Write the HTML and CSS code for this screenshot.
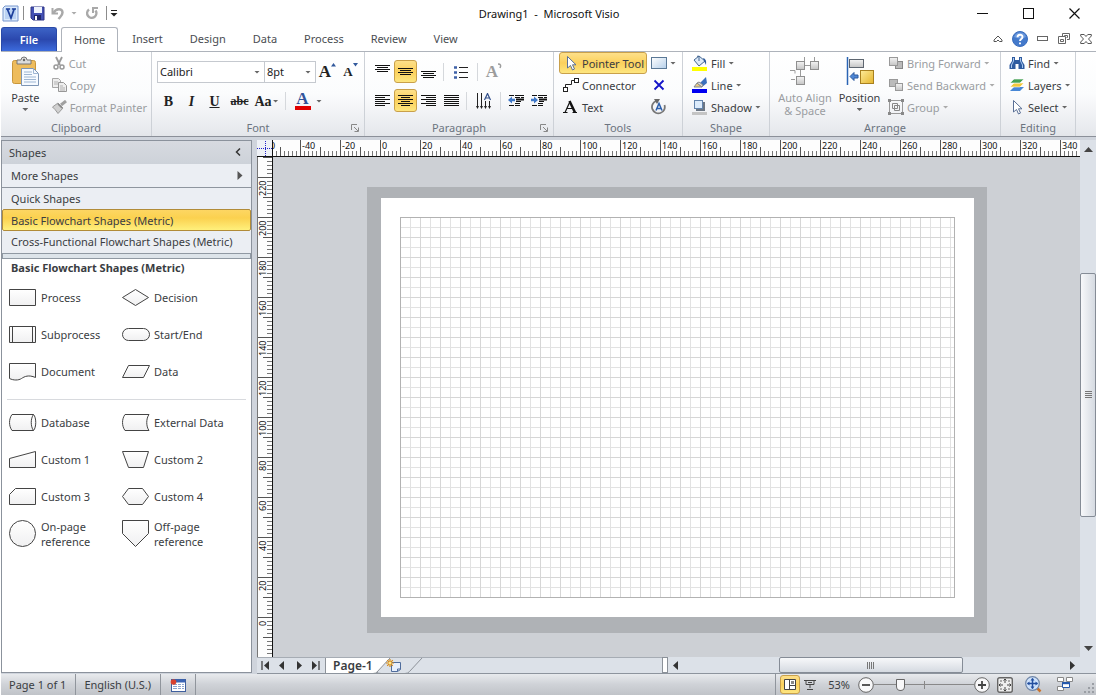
FILE: index.html
```html
<!DOCTYPE html>
<html lang="en">
<head>
<meta charset="utf-8">
<title>Drawing1 - Microsoft Visio</title>
<link rel="stylesheet" href="styles.css">
</head>
<body>
<svg class="defs" aria-hidden="true">
  <defs>
    <linearGradient id="shapeFill" x1="0" y1="0" x2="0" y2="1"><stop offset="0" stop-color="#fff"/><stop offset="1" stop-color="#f0f0f1"/></linearGradient>
    <linearGradient id="greyBox" x1="0" y1="0" x2="0" y2="1"><stop offset="0" stop-color="#f4f4f4"/><stop offset="1" stop-color="#c4c4c4"/></linearGradient>
    <linearGradient id="goldBox" x1="0" y1="0" x2="1" y2="1"><stop offset="0" stop-color="#fdeb9a"/><stop offset="1" stop-color="#e5b52c"/></linearGradient>
    <linearGradient id="blueBox" x1="0" y1="0" x2="1" y2="1"><stop offset="0" stop-color="#fff"/><stop offset="1" stop-color="#b5cfe9"/></linearGradient>
  </defs>
</svg>

<header class="titlebar">
  <div class="quick">
    <svg class="logo" width="17" height="17" viewBox="0 0 17 17"><path d="M3 1h13v15H1V3z" fill="#dceafb" stroke="#7796cd"/><rect x="3" y="3" width="11" height="11" fill="#bcd3f3"/><path d="M4 4h4M10 4h4M5.500 4.500l3.500 8.500 3-8.500" fill="none" stroke="#1d3f9b" stroke-width="1.700"/></svg>
    <span class="qsep"></span>
    <button class="qbtn" aria-label="Save"><svg width="15" height="15" viewBox="0 0 15 15"><path d="M1 1h13v13H3l-2-2z" fill="#4451b4" stroke="#2e3585"/><rect x="4" y="1" width="8" height="6" fill="#eef3fc"/><rect x="4" y="9" width="7" height="5" fill="#20276b"/><rect x="5" y="10" width="2" height="4" fill="#fff"/></svg></button>
    <button class="qbtn" aria-label="Undo"><svg width="14" height="13" viewBox="0 0 14 13"><path d="M1.500 1v5.500H7" fill="none" stroke="#a9a9a9" stroke-width="2"/><path d="M2.500 6C5 1 11.500 1 11.500 5.500c0 3-2 4-4 6.500" fill="none" stroke="#a9a9a9" stroke-width="2.500"/></svg></button>
    <span class="caret dim"></span>
    <button class="qbtn redo" aria-label="Repeat"><svg width="14" height="14" viewBox="0 0 14 14"><path d="M4 3.500A4.600 4.600 0 1 0 10.500 4.500" fill="none" stroke="#a9a9a9" stroke-width="2.500"/><path d="M7 2h6M8 1v6" stroke="#a9a9a9" stroke-width="2"/></svg></button>
    <span class="qsep"></span>
    <button class="qmore" aria-label="Customize Quick Access Toolbar"><svg width="8" height="8" viewBox="0 0 8 8"><path d="M1 1.500h6" stroke="#222"/><path d="M0.500 4h7L4 7.500z" fill="#222"/></svg></button>
  </div>
  <h1 class="wintitle">Drawing1 &nbsp;-&nbsp; Microsoft Visio</h1>
  <div class="winctl">
    <button aria-label="Minimize"><svg width="11" height="11" viewBox="0 0 11 11"><path d="M0 5.500h11" stroke="#111"/></svg></button>
    <button aria-label="Maximize"><svg width="11" height="11" viewBox="0 0 11 11"><rect x=".5" y=".5" width="10" height="10" fill="none" stroke="#111"/></svg></button>
    <button aria-label="Close"><svg width="11" height="11" viewBox="0 0 11 11"><path d="M.5.500l10 10M10.500.500l-10 10" stroke="#111" stroke-width="1.200"/></svg></button>
  </div>
</header>

<nav class="tabs">
  <button class="tab file">File</button>
  <button class="tab active">Home</button>
  <button class="tab">Insert</button>
  <button class="tab">Design</button>
  <button class="tab">Data</button>
  <button class="tab">Process</button>
  <button class="tab">Review</button>
  <button class="tab">View</button>
  <div class="tabtools">
    <button aria-label="Minimize the Ribbon"><svg width="10" height="8" viewBox="0 0 10 8"><path d="M1 5l4-4 4 4v1.500H6.500L5 5 3.500 6.500H1z" fill="#fff" stroke="#555"/></svg></button>
    <button aria-label="Help"><svg width="16" height="16" viewBox="0 0 16 16"><circle cx="8" cy="8" r="7.500" fill="#4379cb" stroke="#3a6dbd"/><path d="M2 6a6.300 6.300 0 0 1 12 0q-6 3-12 0z" fill="#6d9ade"/><path d="M5.500 6.200C5.500 3 10.500 3 10.500 6c0 2-2.500 2-2.500 4M8 11.500v1.800" stroke="#fff" stroke-width="1.900" fill="none"/></svg></button>
    <button aria-label="Minimize Window"><svg width="11" height="5" viewBox="0 0 11 5"><rect x=".5" y=".5" width="10" height="4" fill="#fff" stroke="#666"/></svg></button>
    <button aria-label="Restore Window"><svg width="12" height="11" viewBox="0 0 12 11"><path d="M4.500 3V.5h7v6H9M6.500 3V2.500h3v2H8.500" fill="none" stroke="#666"/><path d="M.5 3.500h7v7h-7zM2.500 6.500h3v2h-3z" fill="none" stroke="#666"/></svg></button>
    <button aria-label="Close Window"><svg width="12" height="10" viewBox="0 0 12 10"><path d="M.7.500h3.500L6 2.500 7.800.5h3.500v1.500L8.500 5l2.800 3v1.500H7.800L6 7.500 4.200 9.500H.7V8l2.800-3L.7 2z" fill="#fff" stroke="#555"/></svg></button>
  </div>
</nav>

<section class="ribbon">
  <div class="group clipboard">
    <div class="body">
      <button class="big"><svg width="29" height="30" viewBox="0 0 29 30"><rect x="1.500" y="4.500" width="23" height="23" rx="2" fill="#eebc5c" stroke="#c9973b"/><path d="M6 8V4h4q0-3 3-3t3 3h4v4z" fill="#dcdcdc" stroke="#777"/><circle cx="13" cy="4" r="1.200" fill="#666"/><path d="M10.500 12.500h12l5 5v12h-17z" fill="#f6faff" stroke="#7d95b5"/><path d="M22.500 12.500v5h5M13 16h8M13 18.500h8M13 21h12M13 23.500h12M13 26h12" fill="none" stroke="#9eb6d3"/></svg><span>Paste</span><i class="caret"></i></button>
      <div class="stack">
        <button class="cmd off"><svg width="14" height="14" viewBox="0 0 14 14"><path d="M4 1l4 8M10 1L6 9" stroke="#9a9a9a" stroke-width="1.800"/><circle cx="4" cy="11" r="2" fill="none" stroke="#9a9a9a" stroke-width="1.500"/><circle cx="10" cy="11" r="2" fill="none" stroke="#9a9a9a" stroke-width="1.500"/></svg>Cut</button>
        <button class="cmd off"><svg width="15" height="14" viewBox="0 0 15 14"><path d="M.5.500h6l2 2v7h-8z" fill="#eee" stroke="#a7a7a7"/><path d="M6.500 4.500h5l3 3v6h-8z" fill="#eee" stroke="#979797"/><path d="M2 4h4M2 6h4M8 8h3M8 10h5M8 12h5" stroke="#b1b1b1"/></svg>Copy</button>
        <button class="cmd off"><svg width="15" height="14" viewBox="0 0 15 14"><path d="M14 1l-5 4" stroke="#a0a0a0" stroke-width="3"/><path d="M6 3l5 5-5 5.500Q3 9 .5 7z" fill="#d0d0d0" stroke="#999"/><path d="M6 4l4 4" stroke="#888" stroke-width="1.500"/></svg>Format Painter</button>
      </div>
    </div>
    <div class="name">Clipboard</div>
  </div>

  <div class="group font">
    <div class="body two">
      <div class="row">
        <span class="combo face"><select aria-label="Font"><option>Calibri</option></select><i class="caret"></i></span>
        <span class="combo size"><select aria-label="Font size"><option>8pt</option></select><i class="caret"></i></span>
        <button class="glyph grow" aria-label="Grow Font"><span>A</span><svg width="5" height="4" viewBox="0 0 5 4"><path d="M0 3.500L2.500 0 5 3.500z" fill="#32599c"/></svg></button>
        <button class="glyph shrink" aria-label="Shrink Font"><span>A</span><svg width="5" height="4" viewBox="0 0 5 4"><path d="M0 0h5L2.500 3.500z" fill="#32599c"/></svg></button>
      </div>
      <div class="row letters">
        <button class="glyph b">B</button>
        <button class="glyph i">I</button>
        <button class="glyph u">U</button>
        <button class="glyph s">abc</button>
        <button class="glyph aa">Aa<i class="caret"></i></button>
        <span class="rsep"></span>
        <button class="glyph color" aria-label="Font Color"><span>A</span></button>
        <i class="caret"></i>
      </div>
    </div>
    <div class="name">Font<button class="launch" aria-label="Font dialog"><svg width="8" height="8" viewBox="0 0 8 8"><path d="M.5 6V.5H6M3 3l4 4M7.500 3.500v4h-4" fill="none" stroke="#888"/></svg></button></div>
  </div>

  <div class="group para">
    <div class="body two">
      <div class="row">
        <button class="ic" aria-label="Align Top"><svg width="15" height="15" viewBox="0 0 15 15"><path d="M0 1.500h15M2 3.500h11M0 5.500h15M2 7.500h11" stroke="#111"/></svg></button>
        <button class="ic on" aria-label="Align Middle"><svg width="15" height="15" viewBox="0 0 15 15"><path d="M0 4.500h15M2 6.500h11M0 8.500h15M2 10.500h11" stroke="#111"/></svg></button>
        <button class="ic" aria-label="Align Bottom"><svg width="15" height="15" viewBox="0 0 15 15"><path d="M0 7.500h15M2 9.500h11M0 11.500h15M2 13.500h11" stroke="#111"/></svg></button>
        <span class="rsep"></span>
        <button class="ic wide" aria-label="Bullets"><svg width="14" height="14" viewBox="0 0 14 14"><path d="M5 2.500h9M5 7.500h9M5 12.500h9" stroke="#222"/><path d="M0 2.500h3M0 7.500h3M0 12.500h3" stroke="#3f62a8" stroke-width="2.500"/></svg></button>
        <span class="rsep"></span>
        <button class="glyph rot" aria-label="Rotate Text">A<svg width="4" height="6" viewBox="0 0 4 6"><path d="M0 1q4 0 2 4" fill="none" stroke="#9c9c9c" stroke-width="1.500"/></svg></button>
      </div>
      <div class="row">
        <button class="ic" aria-label="Align Left"><svg width="15" height="13" viewBox="0 0 15 13"><path d="M0 1.500h15M0 3.500h10M0 5.500h15M0 7.500h10M0 9.500h15M0 11.500h10" stroke="#111"/></svg></button>
        <button class="ic on" aria-label="Center"><svg width="15" height="13" viewBox="0 0 15 13"><path d="M0 1.500h15M3 3.500h9M0 5.500h15M3 7.500h9M0 9.500h15M3 11.500h9" stroke="#111"/></svg></button>
        <button class="ic" aria-label="Align Right"><svg width="15" height="13" viewBox="0 0 15 13"><path d="M0 1.500h15M5 3.500h10M0 5.500h15M5 7.500h10M0 9.500h15M5 11.500h10" stroke="#111"/></svg></button>
        <button class="ic" aria-label="Justify"><svg width="15" height="13" viewBox="0 0 15 13"><path d="M0 1.500h15M0 3.500h15M0 5.500h15M0 7.500h15M0 9.500h15M0 11.500h15" stroke="#111"/></svg></button>
        <span class="rsep"></span>
        <button class="ic wide" aria-label="Text Direction"><svg width="16" height="16" viewBox="0 0 16 16"><path d="M1.500 0v14M5.500 0v14M9.500 8v6M13.500 8v6" stroke="#222"/><path d="M8.500 7l3-6.500 3 6.500M9.500 5h4" fill="none" stroke="#33518c" stroke-width="1.200"/><path d="M0 13h3l-1.500 3zM4 13h3l-1.500 3zM8 13h3l-1.500 3zM12 13h3l-1.500 3z" fill="#222"/></svg></button>
        <span class="rsep"></span>
        <button class="ic" aria-label="Decrease Indent"><svg width="16" height="13" viewBox="0 0 16 13"><path d="M1 1.500h15M7 3.500h9M8 7.500h6M7 9.500h5M1 11.500h11" stroke="#111" stroke-dasharray="5 1 20"/><path d="M8 5.500h8" stroke="#111" stroke-width="2"/><path d="M0 6L4 2.500v2.300h3v2.400H4v2.300z" fill="#3f78c8"/></svg></button>
        <button class="ic" aria-label="Increase Indent"><svg width="16" height="13" viewBox="0 0 16 13"><path d="M1 1.500h15M7 3.500h9M8 7.500h6M7 9.500h5M1 11.500h11" stroke="#111" stroke-dasharray="5 1 20"/><path d="M8 5.500h8" stroke="#111" stroke-width="2"/><path d="M7 6L3 2.500v2.300H0v2.400h3v2.300z" fill="#3f78c8"/></svg></button>
      </div>
    </div>
    <div class="name">Paragraph<button class="launch" aria-label="Paragraph dialog"><svg width="8" height="8" viewBox="0 0 8 8"><path d="M.5 6V.5H6M3 3l4 4M7.500 3.500v4h-4" fill="none" stroke="#888"/></svg></button></div>
  </div>

  <div class="group tools">
    <div class="body">
      <div class="stack">
        <button class="cmd on"><svg width="16" height="16" viewBox="0 0 16 16"><path d="M4.500 1.500v11.500l3-2.500 2 4.500 2-1-2-4.200h3.500z" fill="#fff" stroke="#5a7096"/></svg>Pointer Tool</button>
        <button class="cmd"><svg width="16" height="16" viewBox="0 0 16 16"><path d="M2.500 10V7.500h6v-4h3" fill="none" stroke="#222"/><rect x=".5" y="10.500" width="4" height="4" fill="#fff" stroke="#222"/><rect x="11.500" y="1.500" width="4" height="4" fill="#fff" stroke="#222"/></svg>Connector</button>
        <button class="cmd"><svg width="16" height="16" viewBox="0 0 16 16"><path d="M2 13.500L7 2.500M4.500 9.500h6M0 13.500h4.500M9.500 13.500H14" fill="none" stroke="#111" stroke-width="1.200"/><path d="M6.500 2l5.500 11.500" stroke="#111" stroke-width="2.500"/></svg>Text</button>
      </div>
      <div class="stack side">
        <button class="cmd" aria-label="Rectangle"><svg width="16" height="12" viewBox="0 0 16 12"><rect x=".5" y=".5" width="15" height="11" fill="url(#blueBox)" stroke="#5a7896"/></svg><i class="caret"></i></button>
        <button class="cmd" aria-label="Connection Point"><svg width="16" height="12" viewBox="0 0 16 12"><path d="M3.500 1.500l9 9M12.500 1.500l-9 9" stroke="#1414c8" stroke-width="1.800"/></svg></button>
        <button class="cmd" aria-label="Text Block"><svg width="16" height="16" viewBox="0 0 16 16"><path d="M5 2A6.400 6.400 0 1 0 13.500 6" fill="none" stroke="#777" stroke-width="1.800"/><path d="M3 0h6L6 5z" fill="#666"/><path d="M5 11.500l3-7 3 7M6 9.500h4" fill="none" stroke="#2b5fae" stroke-width="1.500"/></svg></button>
      </div>
    </div>
    <div class="name">Tools</div>
  </div>

  <div class="group shape">
    <div class="body">
      <div class="stack">
        <button class="cmd"><svg width="17" height="16" viewBox="0 0 17 16"><path d="M3 5l5-4 6 5-6 5z" fill="#dce9f8" stroke="#456792"/><path d="M8 6V1.500a1.500 1.500 0 0 0-2 0" fill="none" stroke="#456792"/><path d="M12 3q4 1 3 7l-2-4z" fill="#2f5b9c"/><rect x="1" y="12" width="15" height="4" fill="#ff0"/></svg>Fill<i class="caret"></i></button>
        <button class="cmd"><svg width="17" height="16" viewBox="0 0 17 16"><path d="M15 0l1 6-5 4-3-3z" fill="#3b70bd"/><path d="M3 10l3-4 5 4H3z" fill="#e9cb87" stroke="#7d8795"/><path d="M6 6l5 4 1-2-4-3z" fill="#ddd" stroke="#888"/><rect x="1" y="12" width="15" height="4" fill="#0000f0"/></svg>Line<i class="caret"></i></button>
        <button class="cmd"><svg width="17" height="16" viewBox="0 0 17 16"><rect x="5" y="3" width="9" height="9" fill="#6c7683"/><rect x="3.500" y="1.500" width="8" height="8" fill="#dcebfb" stroke="#6384ac"/><rect x="1" y="13" width="15" height="3" fill="#c4c4c4"/></svg>Shadow<i class="caret"></i></button>
      </div>
    </div>
    <div class="name">Shape</div>
  </div>

  <div class="group arrange">
    <div class="body">
      <button class="big align off"><svg width="30" height="30" viewBox="0 0 30 30"><path d="M14.500 1v4M14.500 9.500h6M24.500 1v4M10.500 14v7M0 14.500h5v3M5 23.500H1" fill="none" stroke="#9b9b9b"/><rect x="6.500" y="5.500" width="8" height="8" fill="url(#greyBox)" stroke="#8f8f8f"/><rect x="20.500" y="5.500" width="8" height="8" fill="url(#greyBox)" stroke="#8f8f8f"/><rect x="6.500" y="20.500" width="8" height="8" fill="url(#greyBox)" stroke="#8f8f8f"/></svg><span>Auto Align<br>&amp; Space</span></button>
      <button class="big"><svg width="28" height="30" viewBox="0 0 28 30"><path d="M1.500 1v28" stroke="#2a64b4" stroke-width="1.500"/><rect x="3.500" y="3.500" width="14" height="8" fill="url(#greyBox)" stroke="#5e6670"/><rect x="14.500" y="14.500" width="13" height="13" fill="url(#goldBox)" stroke="#a8801f"/><path d="M4 20.500l4-4v2.500h4v3H8v2.500z" fill="#4e86d4" stroke="#2d5ba0"/></svg><span>Position</span><i class="caret"></i></button>
      <div class="stack">
        <button class="cmd off"><svg width="16" height="16" viewBox="0 0 16 16"><rect x="7.500" y="6.500" width="7" height="7" fill="#bbb" stroke="#888"/><rect x="1.500" y="2.500" width="8" height="8" fill="url(#greyBox)" stroke="#999"/></svg>Bring Forward<i class="caret dim"></i></button>
        <button class="cmd off"><svg width="16" height="16" viewBox="0 0 16 16"><rect x="1.500" y="2.500" width="8" height="7" fill="#bbb" stroke="#999"/><rect x="7.500" y="6.500" width="7" height="7" fill="url(#greyBox)" stroke="#999"/></svg>Send Backward<i class="caret dim"></i></button>
        <button class="cmd off"><svg width="16" height="16" viewBox="0 0 16 16"><path d="M1.500 1.500h13v13h-13z" fill="none" stroke="#999"/><path d="M4.500 4.500h5v5h-5zM6.500 6.500h5v5h-5z" fill="none" stroke="#888"/><path d="M0 0h3v3H0zM13 0h3v3h-3zM0 13h3v3H0zM13 13h3v3h-3z" fill="#888"/></svg>Group<i class="caret dim"></i></button>
      </div>
    </div>
    <div class="name">Arrange</div>
  </div>

  <div class="group editing">
    <div class="body">
      <div class="stack">
        <button class="cmd"><svg width="16" height="14" viewBox="0 0 16 14"><path d="M3 1h3v3h4V1h3v4l2.500 4v4h-6V8h-3v5h-6V9L3 5z" fill="#2f5b9f"/><path d="M4.500 2v3L2.500 9v3M11.500 2v3l2 4v3" fill="none" stroke="#a9c8ef"/></svg>Find<i class="caret"></i></button>
        <button class="cmd"><svg width="16" height="14" viewBox="0 0 16 14"><path d="M5 9h10l-4 4H1z" fill="#4787d6"/><path d="M5 5h10l-4 4H1z" fill="#f2c83c" stroke="#fff" stroke-width=".6"/><path d="M5 1h10l-4 4H1z" fill="#45a254" stroke="#fff" stroke-width=".6"/></svg>Layers<i class="caret"></i></button>
        <button class="cmd"><svg width="16" height="16" viewBox="0 0 16 16"><path d="M4.500 1.500v11.500l3-2.500 2 4.500 2-1-2-4.200h3.500z" fill="#fff" stroke="#5a7096"/></svg>Select<i class="caret"></i></button>
      </div>
    </div>
    <div class="name">Editing</div>
  </div>
</section>

<main class="work">
  <aside class="shapes">
    <div class="sh-head">Shapes<button aria-label="Minimize the Shapes window"><svg width="6" height="8" viewBox="0 0 6 8"><path d="M5 .5L1.500 4 5 7.500" fill="none" stroke="#333" stroke-width="1.500"/></svg></button></div>
    <button class="sh-item more">More Shapes<svg width="6" height="9" viewBox="0 0 6 9"><path d="M.5 0L5.500 4.500.5 9z" fill="#555"/></svg></button>
    <button class="sh-item">Quick Shapes</button>
    <button class="sh-item sel">Basic Flowchart Shapes (Metric)</button>
    <button class="sh-item">Cross-Functional Flowchart Shapes (Metric)</button>
    <div class="sh-split"></div>
    <h2 class="sh-title">Basic Flowchart Shapes (Metric)</h2>
    <div class="stencil">
      <button><svg width="28" height="18" viewBox="0 0 28 18"><path class="sp" d="M.5.500h26v16H.5z"/></svg>Process</button>
      <button><svg width="28" height="18" viewBox="0 0 28 18"><path class="sp" d="M.5 8.500l13-8 13 8-13 8z"/></svg>Decision</button>
      <button><svg width="28" height="18" viewBox="0 0 28 18"><path class="sp" d="M.5.500h26v16H.5zM3.500.5v16M23.500.5v16"/></svg>Subprocess</button>
      <button><svg width="28" height="18" viewBox="0 0 28 18"><rect class="sp" x=".5" y="2.500" width="27" height="12" rx="6"/></svg>Start/End</button>
      <button><svg width="28" height="18" viewBox="0 0 28 18"><path class="sp" d="M.5.500h26v14c-7-3-11-1-14 1s-8 2-12 0z"/></svg>Document</button>
      <button><svg width="28" height="18" viewBox="0 0 28 18"><path class="sp" d="M6.500 2.500h21l-6 12H.5z"/></svg>Data</button>
    </div>
    <hr class="sh-rule">
    <div class="stencil">
      <button><svg width="28" height="18" viewBox="0 0 28 18"><path class="sp" d="M3 .5h21.500c3 3 3 13 0 16H3C-.3 12-.3 5 3 .5zM24.500.5c-3 4-3 12 0 16"/></svg>Database</button>
      <button><svg width="28" height="18" viewBox="0 0 28 18"><path class="sp" d="M3 .5h24c-3 4-3 12 0 16H3C-.3 12-.3 5 3 .5z"/></svg>External Data</button>
      <button><svg width="28" height="18" viewBox="0 0 28 18"><path class="sp" d="M.5 7.500l26-7v16H.5z"/></svg>Custom 1</button>
      <button><svg width="28" height="18" viewBox="0 0 28 18"><path class="sp" d="M.5.500h26l-5 16h-15z"/></svg>Custom 2</button>
      <button><svg width="28" height="18" viewBox="0 0 28 18"><path class="sp" d="M6.500.5h20v16H.5v-10z"/></svg>Custom 3</button>
      <button><svg width="28" height="18" viewBox="0 0 28 18"><path class="sp" d="M6.500.5h14l6 8-6 8h-14l-6-8z"/></svg>Custom 4</button>
      <button><svg width="28" height="28" viewBox="0 0 28 28"><circle class="sp" cx="13.500" cy="13.500" r="13"/></svg>On-page<br>reference</button>
      <button><svg width="28" height="28" viewBox="0 0 28 28"><path class="sp" d="M.5.500h26v13l-13 13-13-13z"/></svg>Off-page<br>reference</button>
    </div>
  </aside>

  <section class="view">
    <div class="corner"><svg width="15" height="16" viewBox="0 0 15 16"><path d="M8.500 1v15M0 8.500h15" stroke="#2323c8" stroke-dasharray="1 1"/></svg></div>
    <div class="hruler"><div class="marks">
      <span>-60</span><span>-40</span><span>-20</span><span>0</span><span>20</span><span>40</span><span>60</span><span>80</span><span>100</span><span>120</span><span>140</span><span>160</span><span>180</span><span>200</span><span>220</span><span>240</span><span>260</span><span>280</span><span>300</span><span>320</span><span>340</span>
    </div></div>
    <div class="vscroll">
      <button aria-label="Scroll up"><svg width="9" height="5" viewBox="0 0 9 5"><path d="M0 5L4.500 0 9 5z" fill="#444"/></svg></button>
      <div class="lane"><div class="thumb"><svg width="7" height="8" viewBox="0 0 7 8"><path d="M0 .5h7M0 2.500h7M0 4.500h7M0 6.500h7" stroke="#777"/></svg></div></div>
      <button aria-label="Scroll down"><svg width="9" height="5" viewBox="0 0 9 5"><path d="M0 0h9L4.500 5z" fill="#444"/></svg></button>
    </div>
    <div class="vruler"><div class="marks">
      <span>220</span><span>200</span><span>180</span><span>160</span><span>140</span><span>120</span><span>100</span><span>80</span><span>60</span><span>40</span><span>20</span><span>0</span>
    </div></div>
    <div class="canvas"><div class="frame"><div class="page"><div class="grid"></div></div></div></div>
    <div class="bottom">
      <div class="pages">
        <button class="nav" aria-label="First page"><svg width="8" height="9" viewBox="0 0 8 9"><path d="M1 0v9" stroke="#333" stroke-width="1.200"/><path d="M8 0v9L3 4.500z" fill="#333"/></svg></button>
        <button class="nav" aria-label="Previous page"><svg width="8" height="9" viewBox="0 0 8 9"><path d="M6 0v9L1 4.500z" fill="#333"/></svg></button>
        <button class="nav" aria-label="Next page"><svg width="8" height="9" viewBox="0 0 8 9"><path d="M2 0v9l5-4.500z" fill="#333"/></svg></button>
        <button class="nav" aria-label="Last page"><svg width="8" height="9" viewBox="0 0 8 9"><path d="M7 0v9" stroke="#333" stroke-width="1.200"/><path d="M0 0v9l5-4.500z" fill="#333"/></svg></button>
        <button class="ptab">Page-1</button>
        <button class="newpage" aria-label="Insert page"><svg width="50" height="16" viewBox="0 0 50 16"><path d="M0 0h17L4 14Q3 15 0 15z" fill="#fff"/><path d="M17 0L4 14Q3 15.500 0 15.500M4 14q1 1.500 4 1.500h24q3 0 4.500-2L49 0" fill="none" stroke="#8d9299"/><path d="M18.500 4.500h9v7l-3 2h-6z" fill="#e7effc" stroke="#4f6c9c"/><path d="M24.500 13.500v-2.500h3" fill="none" stroke="#4f6c9c"/><path d="M17 1v8M13 5h8M14.200 2.200l5.600 5.600M19.800 2.200l-5.600 5.600" stroke="#d78a17" stroke-width="1.200"/><circle cx="17" cy="5" r="1.500" fill="#ffe88e"/></svg></button>
      </div>
      <div class="splitter"></div>
      <div class="hscroll">
        <button aria-label="Scroll left"><svg width="5" height="9" viewBox="0 0 5 9"><path d="M5 0v9L0 4.500z" fill="#333"/></svg></button>
        <div class="lane"><div class="thumb"><svg width="8" height="7" viewBox="0 0 8 7"><path d="M.5 0v7M2.500 0v7M4.500 0v7M6.500 0v7" stroke="#777"/></svg></div></div>
        <button aria-label="Scroll right"><svg width="5" height="9" viewBox="0 0 5 9"><path d="M0 0v9l5-4.500z" fill="#333"/></svg></button>
      </div>
    </div>
    <div class="endcap"></div>
  </section>
</main>

<footer class="status">
  <button class="st page-no">Page 1 of 1</button>
  <button class="st lang">English (U.S.)</button>
  <button class="st macro" aria-label="Macro recording"><svg width="16" height="14" viewBox="0 0 16 14"><rect x="1.500" y="1.500" width="14" height="12" fill="#fff" stroke="#3f5f9e"/><path d="M2 3h13" stroke="#3b64b4" stroke-width="3"/><path d="M3 6.500h4M8 6.500h3M12 6.500h2M3 8.500h4M8 8.500h3M12 8.500h2M3 10.500h4M8 10.500h3M12 10.500h2" stroke="#8ca4ce"/><circle cx="3.500" cy="4" r="2.800" fill="#d9412f"/></svg></button>
  <div class="right">
    <button class="vbtn on" aria-label="Normal view"><svg width="12" height="11" viewBox="0 0 12 11"><path d="M.5.500h11v10H.5zM5.500.5v10M5.500 6.500h6" fill="#fff" stroke="#444"/><path d="M7 3.500h3" stroke="#888" stroke-width="3"/></svg></button>
    <button class="vbtn" aria-label="Full screen"><svg width="12" height="12" viewBox="0 0 12 12"><path d="M0 1.500h12M2 1.500v4h8v-4M6 6v3M3 10.500h6M4 3.500h4" fill="none" stroke="#444"/></svg></button>
    <button class="pct">53%</button>
    <button class="rnd" aria-label="Zoom out"><svg width="16" height="16" viewBox="0 0 16 16"><circle cx="8" cy="8" r="7.300" fill="#f8f8f9" stroke="#666"/><path d="M4 8h8" stroke="#444" stroke-width="1.800"/></svg></button>
    <input class="zoom" type="range" min="0" max="100" value="24" aria-label="Zoom">
    <button class="rnd" aria-label="Zoom in"><svg width="16" height="16" viewBox="0 0 16 16"><circle cx="8" cy="8" r="7.300" fill="#f8f8f9" stroke="#666"/><path d="M4 8h8M8 4v8" stroke="#444" stroke-width="1.800"/></svg></button>
    <button class="tool fit" aria-label="Fit page"><svg width="16" height="16" viewBox="0 0 16 16"><rect x=".7" y=".7" width="14.600" height="14.600" rx="2" fill="#eee" stroke="#666" stroke-width="1.400"/><path d="M8 2v4M8 10v4M2 8h4M10 8h4M6.500 3.500L8 2l1.500 1.500M6.500 12.500L8 14l1.500-1.500M3.500 6.500L2 8l1.500 1.500M12.500 6.500L14 8l-1.500 1.500" fill="none" stroke="#444"/><path d="M3 3h2v2H3zM11 3h2v2h-2zM3 11h2v2H3zM11 11h2v2h-2z" fill="#aaa"/></svg></button>
    <button class="tool pan" aria-label="Pan and zoom"><svg width="17" height="17" viewBox="0 0 17 17"><path d="M12 12l3.500 3.500" stroke="#c9722c" stroke-width="2.500"/><circle cx="7.500" cy="7.500" r="6.800" fill="#cfe2fb" stroke="#6f86a8" stroke-width="1.200"/><path d="M7.500 2.500v10M2.500 7.500h10" stroke="#234f9f" stroke-width="1.500"/><path d="M5.500 4.500l2-2.500 2 2.500zM5.500 10.500l2 2.500 2-2.500zM4.500 5.500L2 7.500l2.500 2zM10.500 5.500l2.500 2-2.500 2z" fill="#234f9f"/></svg></button>
    <button class="tool win" aria-label="Switch windows"><svg width="16" height="15" viewBox="0 0 16 15"><path d="M.5.500h6v4h-6zM9.500.5h6v4h-6zM.5 9.500h6v4h-6z" fill="#fff" stroke="#888"/><path d="M5.500 5.500h7v5h-7z" fill="#fff" stroke="#2558ab"/><path d="M5 6.200h8" stroke="#2558ab" stroke-width="2"/></svg></button>
    <svg class="grip" width="12" height="12" viewBox="0 0 12 12"><path d="M8 0h2v2H8zM8 4h2v2H8zM8 8h2v2H8zM4 4h2v2H4zM4 8h2v2H4zM0 8h2v2H0z" fill="#9a9ea4"/></svg>
  </div>
</footer>
</body>
</html>
```
FILE: styles.css
```css
* { box-sizing: border-box; }
html, body { height: 100%; }
body {
  margin: 0;
  padding: 0 2px 2px 1px;
  display: flex;
  flex-direction: column;
  background: #fff;
  color: #3a3d42;
  font: 11px/15px "Noto Sans", "Open Sans", sans-serif;
  overflow: hidden;
}
button {
  display: flex;
  align-items: center;
  justify-content: center;
  margin: 0;
  padding: 0;
  border: 0;
  background: none;
  color: inherit;
  font: inherit;
  white-space: nowrap;
}
svg { flex: none; display: block; }
.defs { position: absolute; width: 0; height: 0; }
.caret {
  flex: none;
  width: 6px;
  height: 3px;
  background: #666;
  clip-path: polygon(0 0, 100% 0, 50% 100%);
}
.caret.dim { background: #aaa; }

/* Title bar */
.titlebar { flex: none; display: grid; grid-template-columns: 1fr auto 1fr; align-items: center; height: 26px; margin-right: -1px; }
.quick { display: flex; align-items: center; padding-left: 1px; }
.qsep { width: 1px; height: 14px; margin: 0 5px 0 4px; background: #8c8c8c; }
.qbtn { width: 16px; margin-right: 5px; }
.redo { margin: 0 2px 0 7px; }
.qmore { margin-left: -2px; }
.wintitle { margin: 0; font-size: 11px; font-weight: 400; color: #111; }
.winctl { display: flex; justify-content: flex-end; }
.winctl button { width: 46px; height: 26px; }

/* Ribbon tabs */
.tabs { flex: none; display: flex; height: 26px; padding-top: 1px; border-bottom: 1px solid #aeb3bb; }
.tab { height: 23px; margin-left: 1px; padding: 0 13px; color: #4a4d52; }
.tab.file {
  width: 56px;
  height: 24px;
  margin: 0 4px 0 0;
  border: 1px solid #2a4aa8;
  border-bottom: 0;
  border-radius: 3px 3px 0 0;
  background: linear-gradient(#3c63c6, #2b48ae 50%, #3c6bdd);
  color: #fff;
  font-weight: 600;
}
.tab.active { height: 25px; margin: 0; padding: 0 12px 2px; border: 1px solid #aeb3bb; border-bottom: 0; border-radius: 3px 3px 0 0; background: #fff; }
.tabtools { display: flex; height: 23px; margin: 0 -1px 0 auto; }
.tabtools button { width: 22px; }

/* Ribbon */
.ribbon {
  flex: none;
  display: flex;
  height: 85px;
  border-bottom: 1px solid #8b9099;
  background: linear-gradient(#fff, #fbfcfd 50%, #e9ebef 90%, #e3e6ea);
}
.group { display: flex; flex-direction: column; border-right: 1px solid #cdd1d7; }
.clipboard { width: 151px; }
.font { width: 213px; }
.para { width: 189px; }
.tools { width: 129px; }
.shape { width: 87px; }
.arrange { width: 231px; }
.editing { width: 75px; }
.body { display: flex; height: 68px; }
.body.two { flex-direction: column; padding: 5px 0 0 5px; }
.para .body.two { padding-left: 6px; }
.row { display: flex; align-items: center; height: 29px; }
.name { position: relative; text-align: center; color: #6c7480; }
.launch { position: absolute; right: 5px; top: 4px; }
.stack { display: flex; flex-direction: column; align-items: flex-start; }
.cmd { height: 22px; gap: 3px; padding: 0 3px; border: 1px solid transparent; border-radius: 3px; justify-content: flex-start; }
.off { color: #9a9da1; }
.on { border: 1px solid #c9a04a; border-radius: 3px; background: linear-gradient(#fde08a, #fbd05c 50%, #fde680); }
.big { flex-direction: column; justify-content: flex-start; width: 49px; padding-top: 4px; }
.big span { margin-top: 5px; line-height: 13px; }
.big .caret { margin-top: 4px; }
.big.align { width: 60px; }
.clipboard .body { padding-left: 1px; }
.clipboard .stack { margin-left: -1px; }
.arrange .body { padding-left: 5px; }
.tools .body, .shape .body, .editing .body { padding-left: 4px; }
.tools .body { padding-left: 5px; }
.tools .stack { width: 88px; }
.tools .stack .on { width: 88px; }
.tools .side { width: 34px; }
.rsep { width: 1px; height: 18px; margin: 0 3px; background: #d5d8dc; }

.combo { position: relative; height: 22px; border: 1px solid #c5c9cf; background: #fff; }
.combo select { width: 100%; height: 20px; padding: 0 2px; border: 0; appearance: none; background: none; font: inherit; color: #222; }
.combo .caret { position: absolute; right: 4px; top: 9px; }
.face { width: 108px; }
.size { width: 52px; margin-left: -1px; }
.glyph { width: 23px; height: 23px; color: #222; font-family: "Liberation Serif", serif; font-weight: 700; font-size: 14px; }
.glyph svg { align-self: flex-start; margin-top: 3px; }
.grow { font-size: 17px; }
.shrink { font-size: 13px; }
.i { font-style: italic; }
.u { text-decoration: underline; }
.s { width: 27px; font-size: 12px; text-decoration: line-through; }
.aa { width: 27px; gap: 1px; }
.rot { width: 26px; font-size: 17px; color: #9c9c9c; }
.letters { height: 30px; }
.letters .rsep { margin: 0 5px; }
.color { flex-direction: column; margin-right: 2px; color: #32549b; font-size: 17px; }
.color span { width: 16px; line-height: 14px; border-bottom: 4px solid #e00000; }
.ic { width: 23px; height: 23px; }
.ic.wide { width: 27px; }

/* Work area */
.work { flex: 1; min-height: 0; display: flex; gap: 5px; padding-top: 3px; background: #cfd4dc; }
.shapes {
  flex: none;
  width: 251px;
  margin-bottom: 1px;
  border: 1px solid #8b929c;
  background: #fff;
}
.sh-head { display: flex; justify-content: space-between; align-items: center; height: 23px; padding: 0 10px 1px 7px; background: linear-gradient(#d7dae0, #cdd2d9); }
.sh-item { width: 100%; height: 22px; padding: 0 8px 1px 9px; justify-content: flex-start; background: #ebeef3; }
.sh-item.more { height: 24px; justify-content: space-between; border-bottom: 1px solid #8e959e; }
.sh-item.more + .sh-item { height: 21px; }
.sh-item.sel { padding: 0 8px; border: 1px solid #b18b38; border-radius: 2px; background: linear-gradient(#fdd663, #fbd14f 40%, #fff07c); }
.sh-split { height: 6px; border: 1px solid #9099a3; background: #dde4ea; }
.sh-title { margin: 0; padding: 0 9px; font-size: 11px; font-weight: 700; line-height: 17px; }
.stencil { display: grid; grid-template-columns: 113px 1fr; grid-auto-rows: 37px; padding: 3px 0 0 7px; }
.stencil button { justify-content: flex-start; gap: 4px; text-align: left; }
.sp { fill: url(#shapeFill); stroke: #444; stroke-width: 1; }
.sh-rule { margin: 9px 5px 1px; border: 0; border-top: 1px solid #d8dade; }

.view { flex: 1; min-width: 0; display: grid; grid-template-columns: 16px minmax(0, 1fr) 16px; grid-template-rows: 17px minmax(0, 1fr) 17px; }
.corner { border-right: 1px solid #111; border-bottom: 1px solid #111; background: #eef1f6; }
.hruler, .vruler { overflow: hidden; background: #fdfdfd; color: #111; font-size: 9px; line-height: 9px; }
.hruler { border-bottom: 1px solid #111; }
.vruler { border-right: 1px solid #111; border-left: 1px solid #777; }
.hruler .marks {
  display: flex;
  height: 16px;
  margin-left: -13px;
  background:
    linear-gradient(90deg, #555 1px, transparent 1px) 0 0 / 40px 16px repeat-x,
    linear-gradient(90deg, #555 1px, transparent 1px) 0 100% / 20px 9px repeat-x,
    linear-gradient(90deg, #777 1px, transparent 1px) 0 100% / 4px 5px repeat-x;
}
.hruler span { flex: none; width: 40px; padding: 1px 0 0 2px; }
.vruler .marks {
  height: 100%;
  padding-top: 20px;
  background:
    linear-gradient(#555 1px, transparent 1px) 0 20px / 14px 40px repeat-y,
    linear-gradient(#555 1px, transparent 1px) 100% 0 / 9px 20px repeat-y,
    linear-gradient(#777 1px, transparent 1px) 100% 0 / 5px 4px repeat-y;
}
.vruler span { display: block; width: 9px; height: 40px; padding-bottom: 4px; writing-mode: vertical-rl; transform: rotate(180deg); text-align: end; }
.canvas { display: flex; padding: 30px 93px 24px 94px; background: #cdd0d5; }
.frame { flex: 1; display: flex; padding: 11px 13px 16px 14px; background: #afb2b6; }
.page { flex: 1; display: flex; padding: 19px; background: #fff; }
.grid {
  flex: 1;
  border: 1px solid #b2b2b2;
  background:
    linear-gradient(90deg, #d6d6d6 1px, transparent 1px) -1px -1px / 20px 20px,
    linear-gradient(#d6d6d6 1px, transparent 1px) -1px -1px / 20px 20px,
    linear-gradient(90deg, #e2e2e2 1px, transparent 1px) -1px -1px / 10px 10px,
    linear-gradient(#e2e2e2 1px, transparent 1px) -1px -1px / 10px 10px;
}
.lane { flex: 1; display: flex; }
.thumb { display: flex; align-items: center; justify-content: center; border: 1px solid #858c96; border-radius: 2px; }
.vscroll { grid-row: span 2; display: flex; flex-direction: column; background: #dce1e8; }
.vscroll button { height: 18px; }
.vscroll .lane { flex-direction: column; }
.vscroll .lane::before { content: ""; flex: 116; }
.vscroll .lane::after { content: ""; flex: 123; }
.vscroll .thumb { flex: 243; background: linear-gradient(90deg, #f7f8fa, #d5dae1); }
.bottom { grid-column: 1 / 3; display: flex; border-bottom: 1px solid #8d949d; background: #dce1e8; }
.pages { flex: 405; display: flex; border-top: 1px solid #a6acb4; }
.nav { width: 17px; padding-right: 2px; }
.ptab { height: 15px; padding: 0 0 0 7px; border-left: 1px solid #8d9299; background: #fff; font-weight: 600; font-size: 12px; }
.splitter { width: 6px; border: 1px solid #8b9199; background: #fff; }
.hscroll { flex: 413; display: flex; }
.hscroll button { width: 15px; }
.hscroll .lane::before { content: ""; flex: 97; }
.hscroll .lane::after { content: ""; flex: 102; }
.hscroll .thumb { flex: 183; background: linear-gradient(#f7f8fa, #d5dae1); }
.endcap { border-bottom: 1px solid #8d949d; background: #dce1e8; }

/* Status bar */
.status { flex: none; display: flex; height: 21px; background: linear-gradient(#e8eaed, #cfd2d7 50%, #c0c3c8); }
.st { padding: 0 9px 0 8px; border-right: 1px solid #90959c; }
.macro { width: 35px; }
.right { display: flex; align-items: center; margin-left: auto; border-left: 1px solid #90959c; padding-left: 4px; }
.vbtn { width: 20px; height: 19px; }
.pct { width: 38px; }
.zoom { width: 100px; height: 16px; margin: 0; appearance: none; background: linear-gradient(#888, #888) 50% 50% / 100% 1px no-repeat, linear-gradient(#888, #888) 50% 50% / 1px 8px no-repeat; }
.zoom::-webkit-slider-thumb { appearance: none; width: 9px; height: 12px; border: 1px solid #666; border-radius: 1px 1px 5px 5px; background: #f8f8f9; }
.fit { width: 30px; }
.pan { width: 26px; }
.win { width: 38px; }
.grip { align-self: flex-end; }
```
